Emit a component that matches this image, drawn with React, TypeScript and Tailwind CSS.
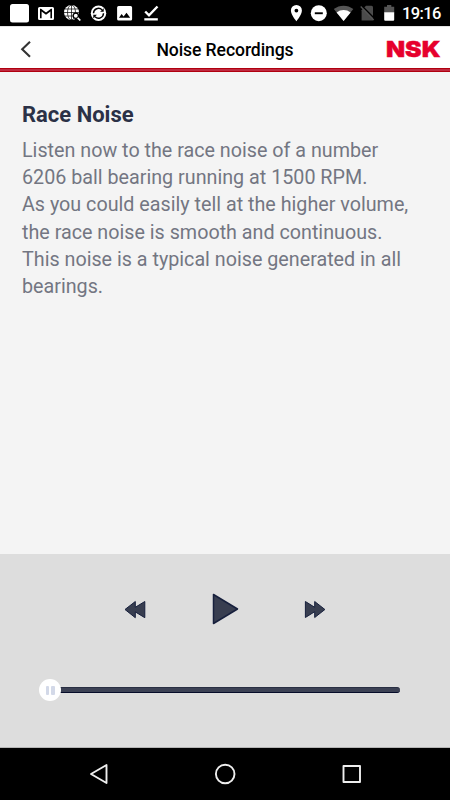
import React from "react";

function StatusBar() {
  return (
    <div className="flex h-[26px] shrink-0 items-start bg-black text-white">
      <svg className="h-[26px] w-[170px] shrink-0" viewBox="0 0 170 26" fill="white">
        <rect x="10" y="4" width="19" height="18.5" rx="2.5" />
        <path fillRule="evenodd" d="M39.5 7h13a1.5 1.5 0 0 1 1.5 1.500v10a1.500 1.500 0 0 1-1.500 1.500h-13a1.500 1.500 0 0 1-1.500-1.500v-10a1.500 1.500 0 0 1 1.500-1.500zM40 18.300h1.600v-6.800l4.400 3.200 4.400-3.200v6.800h1.600V8.700h-1L46 12.500 41 8.700h-1z" />
        <circle cx="71.500" cy="12.500" r="7.500" />
        <g fill="none" stroke="black" strokeWidth="0.700">
          <path d="M71.500 5v15M64 12.500h15M65 9h13M65 16h13" />
          <ellipse cx="71.500" cy="12.500" rx="4" ry="7.500" />
        </g>
        <circle cx="75.800" cy="15.800" r="2.600" fill="white" stroke="black" strokeWidth="1.300" />
        <path d="M77.700 17.800l2.600 2.700" stroke="white" strokeWidth="1.800" />
        <circle cx="98.500" cy="13.300" r="7.700" />
        <g fill="none" stroke="black" strokeWidth="1.400">
          <path d="M93.500 13.300a5 5 0 0 1 8.500-3.500M103.500 13.300a5 5 0 0 1-8.500 3.500" />
        </g>
        <path d="M103.700 8.200v3.600h-3.600zM93.300 18.400v-3.600h3.600z" fill="black" />
        <path fillRule="evenodd" d="M118.600 6h12a1.500 1.500 0 0 1 1.500 1.500v11.500a1.500 1.500 0 0 1-1.500 1.500h-12a1.500 1.500 0 0 1-1.500-1.500V7.500a1.500 1.500 0 0 1 1.500-1.500zM119 17.700h11.200l-3.700-5-2.900 3.700-2-2.500z" />
        <path d="M145.200 11.500l3.800 3.800 8.500-8.800" fill="none" stroke="white" strokeWidth="2.400" />
        <path d="M144.300 18.200h13.500v2.300h-13.500z" />
      </svg>
      <div className="grow" />
      <svg className="h-[26px] w-[120px] shrink-0" viewBox="280 0 120 26" fill="white">
        <path fillRule="evenodd" d="M296.400 5a5.500 5.500 0 0 0-5.500 5.500c0 4.200 5.500 10.700 5.500 10.700s5.500-6.500 5.500-10.700A5.500 5.500 0 0 0 296.400 5zm0 3.700a1.900 1.900 0 1 1 0 3.800 1.900 1.900 0 0 1 0-3.800z" />
        <circle cx="318.800" cy="13.200" r="8" />
        <path d="M314.800 12.300h8v1.900h-8z" fill="black" />
        <path d="M333.800 9c5.700-4.500 13.800-4.500 19.500 0l-9.700 11.900z" fill="#555" />
        <path d="M336.600 12.400c4.200-3.300 9.800-3.300 14 0l-7 8.500z" />
        <path d="M366 5.800h5.500q1.500 0 1.500 1.500v13.200h-11.400V10.200z" fill="#4b4b4b" />
        <path d="M361.500 5.500l13.500 13.500" stroke="black" strokeWidth="1.500" />
        <path d="M360.700 6.500l13 13.500" stroke="#555" strokeWidth="1.300" />
        <path d="M387 5h4.300v1.700h2.900v6H384.200v-6h2.800z" fill="#555" />
        <path d="M384.200 12.300h10v7.500q0 1-1 1h-8q-1 0-1-1z" />
      </svg>
      <span className="w-[50px] shrink-0 whitespace-nowrap pl-[2px] text-[16.500px] leading-[28px] font-medium tracking-[-0.600px]">19:16</span>
    </div>
  );
}

function Header() {
  return (
    <header className="flex h-[46px] shrink-0 flex-col bg-white shadow-[inset_0_1px_0_#e4e4e4]">
      <div className="flex h-[42px] items-center">
        <button className="flex w-[100px] pl-5 pt-[3px]" aria-label="Back">
          <svg className="h-5 w-3" viewBox="0 0 12 20" fill="none" stroke="#333" strokeWidth="2.100">
            <path d="M10 2.700L2.200 10.200 10 17.700" />
          </svg>
        </button>
        <h1 className="grow pt-[6px] text-center text-[17.600px] leading-[42px] font-medium tracking-[-0.100px] text-black">Noise Recordings</h1>
        <svg className="h-[42px] w-[100px]" viewBox="350 26 100 42">
          <text x="386" y="56.900" fontFamily="Inter, sans-serif" fontWeight="900" fontSize="22" textLength="54.500" lengthAdjust="spacingAndGlyphs" fill="#e6002d" stroke="#e6002d" strokeWidth="0.400">NSK</text>
        </svg>
      </div>
      <div className="h-1 border-y border-[#b00010] bg-[#bf2a40]" />
    </header>
  );
}

function Player() {
  return (
    <section className="flex h-[194px] shrink-0 flex-col border-b border-[#b5b5b5] bg-[#dddddd]">
      <div className="flex h-[111px] items-center justify-center pt-[1px] text-[#363c4e]">
        <svg className="h-[60px] w-[230px]" viewBox="110 580 230 60" fill="#383e50" stroke="#17203d" strokeWidth="1" strokeLinejoin="round">
          <path d="M135.300 601.500v5.800l9.500-5.800v16.200l-9.500-5.800v5.800L125 609.500z" />
          <path d="M213.500 594.500v29L237.500 609z" strokeWidth="1.500" />
          <path d="M305.400 601.500l9.300 5.800v-5.800l10.200 8-10.200 8v-5.800l-9.300 5.800z" />
        </svg>
      </div>
      <div className="flex h-[50px] items-center pl-[39px] pr-[50px]">
        <div className="z-10 flex h-[22px] w-[22px] shrink-0 items-center justify-center gap-[2px] rounded-full bg-white">
          <i className="h-[9px] w-[3.500px] rounded-[1px] bg-[#d3d9e8]" />
          <i className="h-[9px] w-[3.500px] rounded-[1px] bg-[#d3d9e8]" />
        </div>
        <div className="-ml-1 h-[6px] grow rounded-r-[3px] border-y border-t-[#292f43] border-b-[#050b29] bg-[#3c4154]" />
      </div>
    </section>
  );
}

export default function App() {
  return (
    <div className="flex h-[800px] w-[450px] flex-col overflow-hidden bg-[#f4f4f4] font-[Roboto,sans-serif]">
      <StatusBar />
      <Header />
      <main className="grow px-[22px] pt-[29px]">
        <h2 className="text-[22px] leading-[28px] font-bold text-[#2b3146]">Race Noise</h2>
        <p className="mt-[8px] whitespace-nowrap text-[19.730px] leading-[27.200px] text-[#737682]">
          Listen now to the race noise of a number<br />
          6206 ball bearing running at 1500 RPM.<br />
          As you could easily tell at the higher volume,<br />
          the race noise is smooth and continuous.<br />
          This noise is a typical noise generated in all<br />
          bearings.
        </p>
      </main>
      <Player />
      <nav className="h-[52px] shrink-0 bg-black">
        <svg className="h-[52px] w-[450px]" viewBox="0 748 450 52" fill="none" stroke="#eee" strokeWidth="1.900" strokeLinejoin="round">
          <path d="M106.500 765v18L91 774z" />
          <circle cx="225.200" cy="774" r="9.300" />
          <rect x="343.500" y="766" width="16.500" height="16" />
        </svg>
      </nav>
    </div>
  );
}
